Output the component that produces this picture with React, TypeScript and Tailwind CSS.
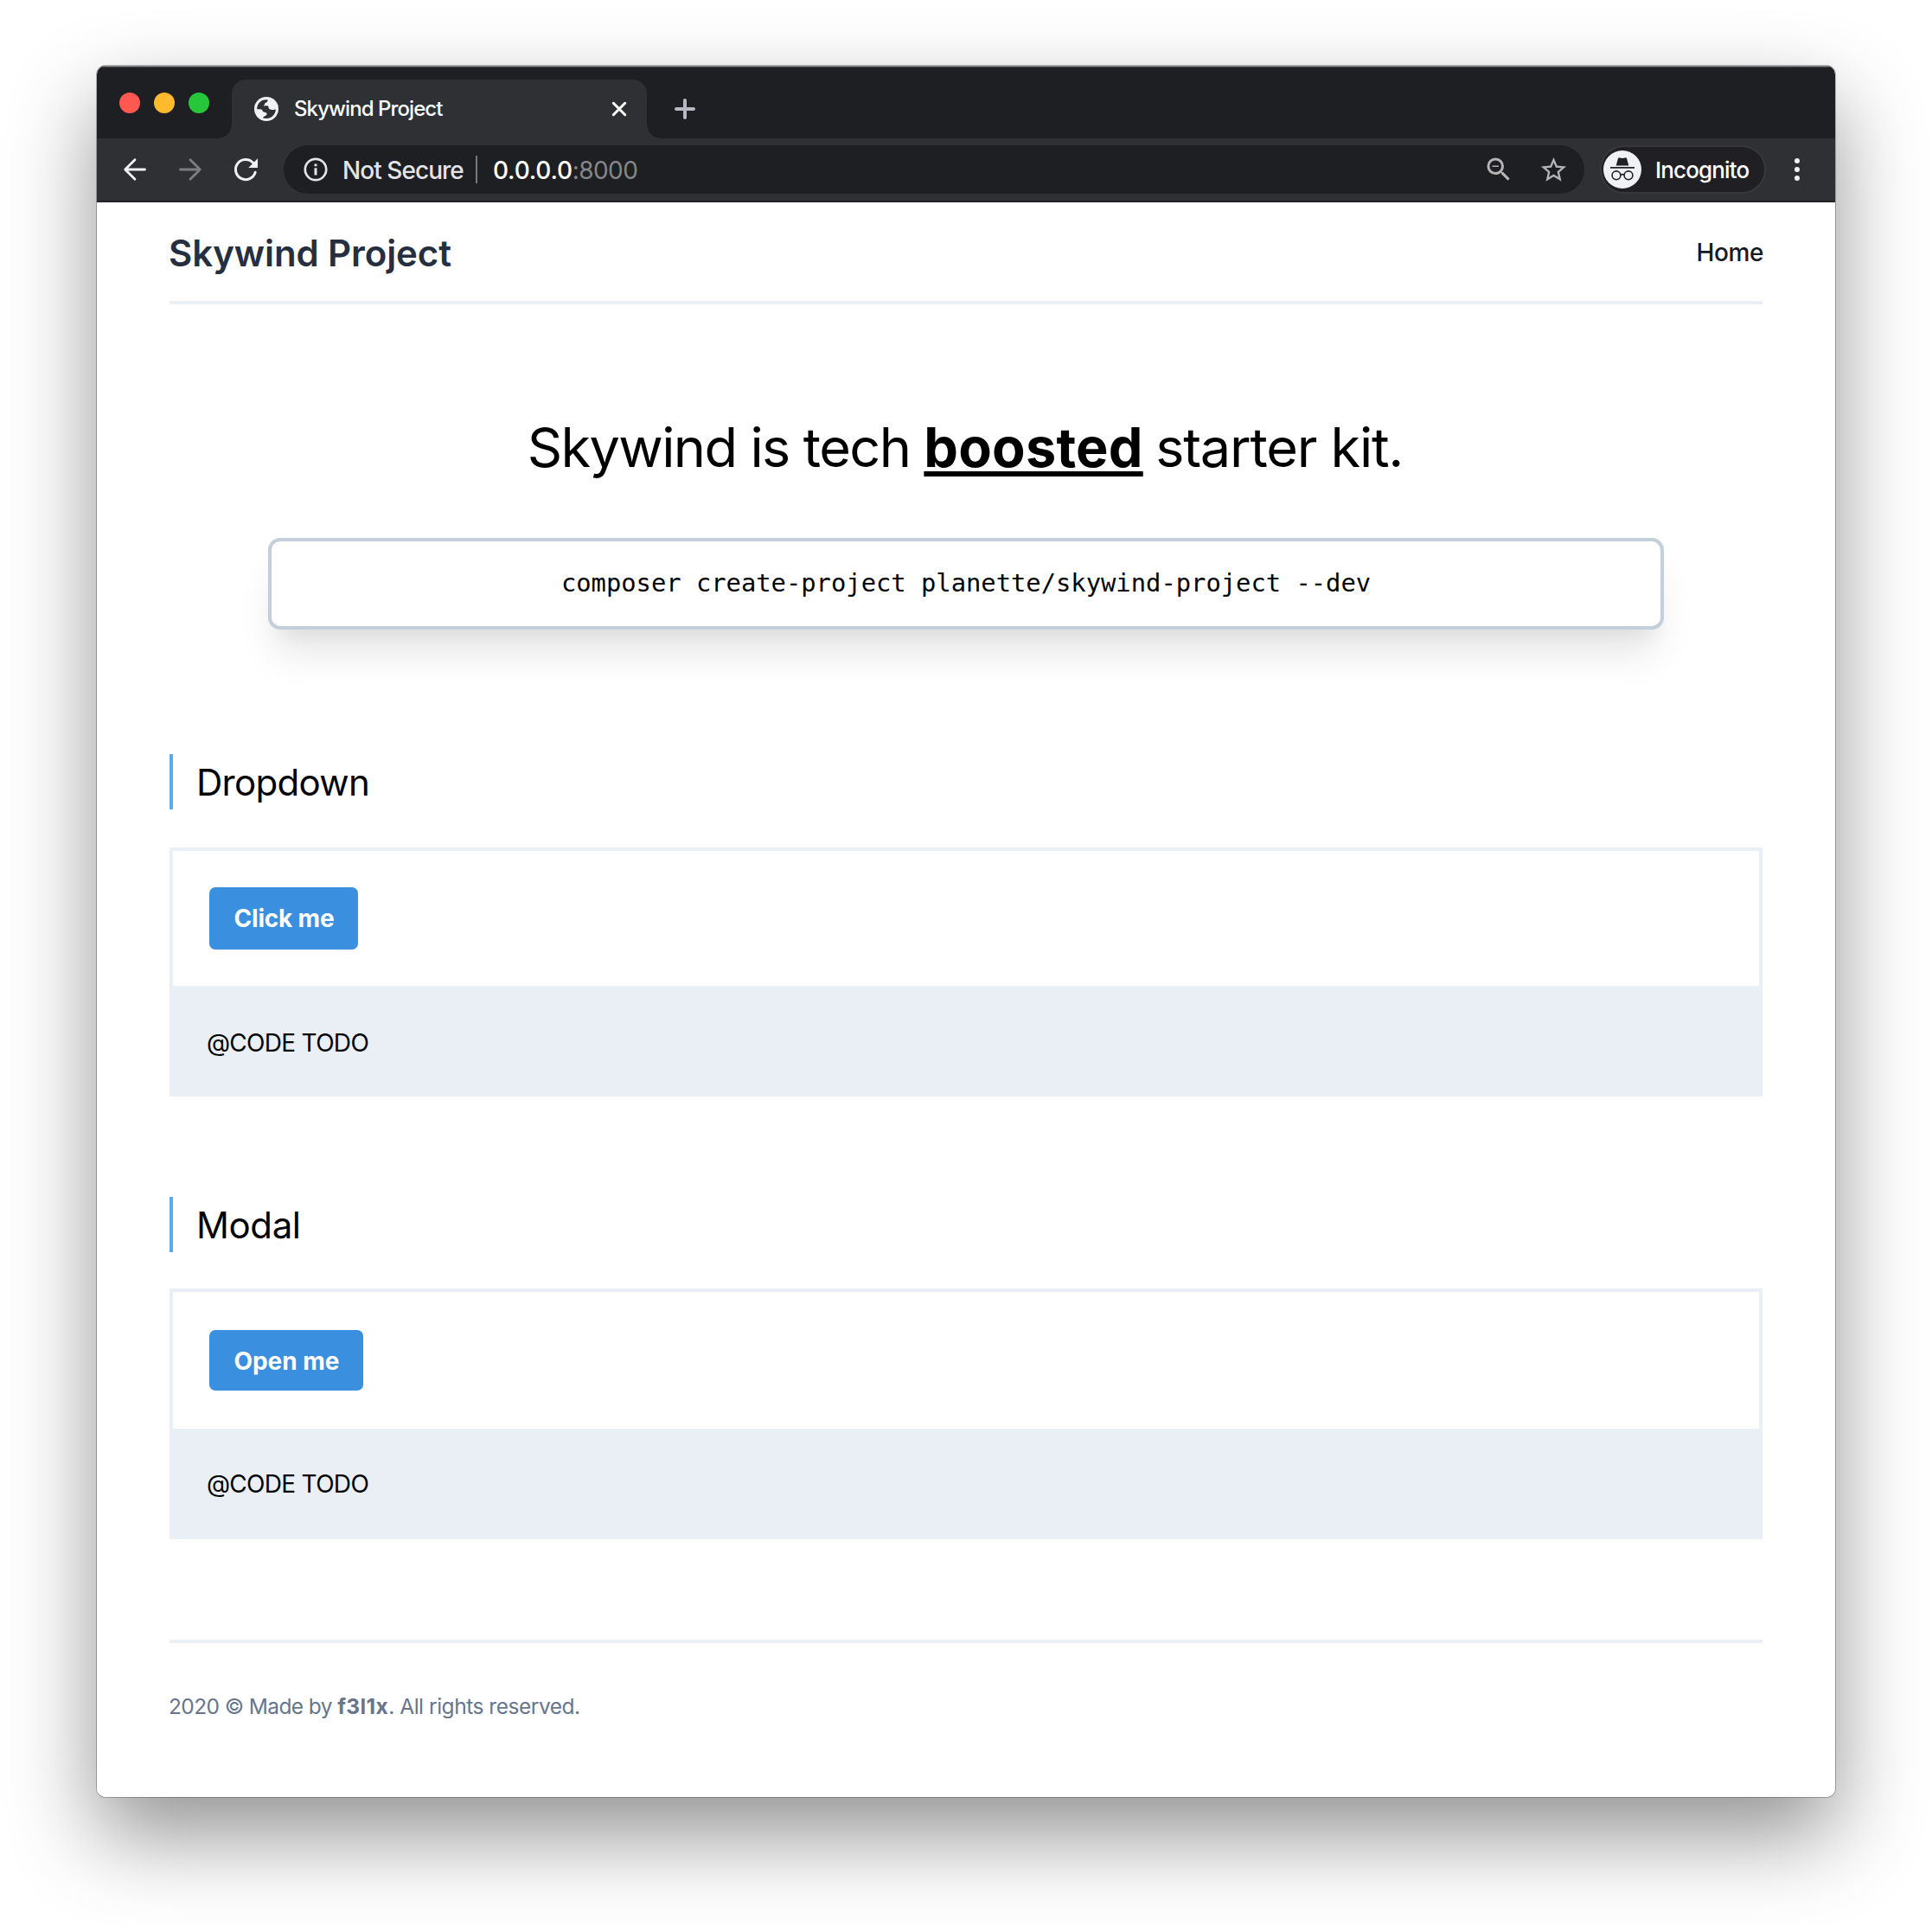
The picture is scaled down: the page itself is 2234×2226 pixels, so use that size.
import type { ReactNode } from "react";
import { MdStarBorder, MdZoomOut } from "react-icons/md";

function GlobeIcon() {
  return (
    <svg width="28" height="28" viewBox="0 0 28 28">
      <circle cx="14" cy="14" r="14" fill="#f0f1f4" />
      <path
        d="M3.2 14.2C3 11 4.500 7.200 7.500 5.200C9.500 3.700 12.500 3 15.500 3.500C15.800 5 15 6.300 13.600 6.500C12.800 6.600 12.300 7.200 12.300 8C12.300 9.200 11 9.300 10.800 10.300C11.500 10.900 14.200 10 15.800 10.500C17 11.300 16 13 17.500 14C19.500 15.600 22 15.200 24.800 14.200C24.800 20 20 25 14 25C12.600 25 11.200 24.700 10 24.300C10.500 22.700 12 22.300 13.300 21.700C14.600 21 15 19.400 14 18.500C12.700 17.500 10.500 18.300 9.700 16.600C9.300 15 8.500 14.200 6.800 14.200Z"
        fill="#2f3033"
      />
    </svg>
  );
}

function ArrowIcon({ className }: { className: string }) {
  return (
    <svg className={className} width="28" height="28" viewBox="0 0 28 28" fill="none" stroke="currentColor" strokeWidth="2.800" strokeLinecap="round" strokeLinejoin="round">
      <path d="M25.500 14H3M14 2.700L2.700 14L14 25.300" />
    </svg>
  );
}

function ReloadIcon() {
  return (
    <svg width="32" height="32" viewBox="0 0 32 32" fill="none">
      <path d="M27.200 19.200A11.600 11.600 0 1 1 24.600 8.200" stroke="#f0f1f4" strokeWidth="3" strokeLinecap="round" />
      <path d="M30 3.300V14H19.300Z" fill="#f0f1f4" />
    </svg>
  );
}

function InfoIcon() {
  return (
    <svg width="28" height="28" viewBox="0 0 28 28" fill="none">
      <circle cx="14" cy="14" r="12.200" stroke="#e4e4e6" strokeWidth="2.700" />
      <path d="M14 12.300V20.500M14 7.500V10.300" stroke="#e4e4e6" strokeWidth="3" />
    </svg>
  );
}

function IncognitoIcon() {
  return (
    <svg width="44" height="44" viewBox="0 0 44 44" fill="none">
      <circle cx="22" cy="22" r="22" fill="#f0f1f4" />
      <path d="M14.700 17.400L16.800 9.700Q17.300 8 19 8.400L22 9.100L25 8.400Q26.700 8 27.200 9.700L29.300 17.400Z" fill="#202124" />
      <path d="M8 19.900H36" stroke="#202124" strokeWidth="1.700" />
      <circle cx="15" cy="28.800" r="4.900" stroke="#202124" strokeWidth="1.600" />
      <circle cx="29" cy="28.800" r="4.900" stroke="#202124" strokeWidth="1.600" />
      <path d="M19.800 28.300Q22 27 24.200 28.300" stroke="#202124" strokeWidth="1.600" />
    </svg>
  );
}

function TabStrip() {
  return (
    <div className="flex h-[84px] bg-[#1e1f22] pl-[26px] shadow-[inset_0_1px_0_#8a8b8d,inset_0_2px_0_#4a4b4e]">
      <div className="mt-[31px] flex gap-4">
        <span className="size-6 rounded-full bg-[#ff5850]" />
        <span className="size-6 rounded-full bg-[#ffba2d]" />
        <span className="size-6 rounded-full bg-[#27c73c]" />
      </div>
      <div className="relative mt-4 ml-[26px] flex h-[68px] w-[480px] items-center rounded-t-2xl bg-[#2f3033] pl-[26px]">
        <span className="absolute bottom-0 -left-4 size-4 bg-[radial-gradient(circle_at_0_0,#1e1f22_15.500px,#2f3033_16px)]" />
        <span className="absolute -right-4 bottom-0 size-4 bg-[radial-gradient(circle_at_100%_0,#1e1f22_15.500px,#2f3033_16px)]" />
        <GlobeIcon />
        <span className="ml-[18px] -mt-px flex-1 text-[24px] leading-[30px] font-medium tracking-[-0.92px] text-white">Skywind Project</span>
        <svg className="mr-[23px]" width="18" height="18" viewBox="0 0 18 18" stroke="#fff" strokeWidth="3" strokeLinecap="round">
          <path d="M2.300 2.300L15.700 15.700M15.700 2.300L2.300 15.700" />
        </svg>
      </div>
      <svg className="mt-[38px] ml-8" width="24" height="24" viewBox="0 0 24 24" stroke="#b6b9c1" strokeWidth="4" strokeLinecap="round">
        <path d="M12 2V22M2 12H22" />
      </svg>
    </div>
  );
}

function Toolbar() {
  return (
    <div className="flex h-[74px] items-center border-b-2 border-[#232226] bg-[#2f3033] pl-[30px]">
      <ArrowIcon className="text-[#f0f1f4]" />
      <ArrowIcon className="ml-9 rotate-180 text-[#7c7d80]" />
      <div className="ml-[34px]">
        <ReloadIcon />
      </div>
      <div className="ml-7 flex h-14 w-[1504px] items-center rounded-full bg-[#1e1f22] pl-[23px] text-[28px] leading-[34px]">
        <InfoIcon />
        <span className="ml-[17px] w-[138px] pt-px font-medium tracking-[-0.95px] whitespace-nowrap text-[#e4e4e6]">Not Secure</span>
        <span className="ml-4 h-8 w-0.5 bg-[#77787b]" />
        <span className="ml-[18px] flex-1 pt-px font-medium tracking-[-0.2px] text-white">
          0.0.0.0<span className="font-normal tracking-[-0.6px] text-[#85878a]">:8000</span>
        </span>
        <MdZoomOut size={36} color="#b5b3b3" />
        <MdStarBorder className="mr-[18px] ml-7" size={35} color="#b5b3b3" />
      </div>
      <div className="ml-[18px] flex h-14 w-[192px] items-center rounded-full border-2 border-[#38383b] bg-[#202024] pl-0.5">
        <IncognitoIcon />
        <span className="ml-4 pt-px text-[26px] leading-8 font-medium tracking-[-0.85px] text-white">Incognito</span>
      </div>
      <div className="ml-[33px] flex flex-col gap-1">
        <span className="size-1.5 rounded-full bg-[#f0f1f4]" />
        <span className="size-1.5 rounded-full bg-[#f0f1f4]" />
        <span className="size-1.5 rounded-full bg-[#f0f1f4]" />
      </div>
    </div>
  );
}

function SectionTitle({ className, children }: { className: string; children: ReactNode }) {
  return (
    <h2 className={`flex h-16 items-center border-l-4 border-[#5aa9e8] pt-0.5 pl-[27px] text-[42px] leading-[52px] text-black ${className}`}>
      {children}
    </h2>
  );
}

type ExampleProps = { className: string; buttonClass: string; codeClass: string; label: string };

function Example({ className, buttonClass, codeClass, label }: ExampleProps) {
  return (
    <div className={`flex flex-col border-4 border-[#eaeff6] ${className}`}>
      <div className="flex flex-1 items-center pl-[42px]">
        <button className={`rounded-[7px] bg-[#3a8fde] pl-[28.500px] text-left text-[28px] leading-[34px] font-bold text-white ${buttonClass}`}>
          {label}
        </button>
      </div>
      <div className={`flex h-[124px] items-center bg-[#eaeff6] pl-[39px] text-[28px] leading-[34px] tracking-[-0.7px] text-black ${codeClass}`}>
        @CODE TODO
      </div>
    </div>
  );
}

export default function App() {
  return (
    <div className="h-[2226px] w-[2234px] overflow-hidden bg-white pt-[76px] pl-[112px] font-['Inter',sans-serif]">
      <div className="h-[2002px] w-[2010px] rounded-[10px] shadow-[0_0_0_1px_rgba(0,0,0,0.26),0_44px_100px_rgba(0,0,0,0.43)]">
        <div className="flex h-full flex-col overflow-hidden rounded-[10px] bg-white">
          <TabStrip />
          <Toolbar />
          <div className="px-[84px]">
            <header className="flex h-[118px] items-center justify-between border-b-4 border-[#eaeff6] pt-[3px]">
              <span className="-ml-px text-[42px] leading-[52px] font-semibold tracking-[-0.1px] text-[#262f40]">Skywind Project</span>
              <a className="-mt-[2px] -mr-px text-[28px] leading-[34px] font-medium tracking-[-0.4px] text-[#131a28]">Home</a>
            </header>

            <h1 className="mt-[125px] pr-0.5 text-center text-[63px] leading-[80px] whitespace-nowrap text-black">
              <span className="tracking-[-1.63px]">Skywind is tech </span>
              <strong className="font-bold tracking-[0.2px] underline decoration-[6px] underline-offset-[5px] [text-decoration-skip-ink:none]">boosted</strong>
              <span className="-ml-0.5 tracking-[-1.25px]"> starter kit.</span>
            </h1>

            <div className="mx-[114px] mt-[65px] flex h-[106px] items-center justify-center rounded-[14px] border-4 border-[#c3cfdb] bg-white pb-0.5 font-['DejaVu_Sans_Mono',monospace] text-[28.800px] leading-[40px] text-black shadow-[0_36px_45px_-9px_rgba(0,0,0,0.1),0_18px_18px_-9px_rgba(0,0,0,0.04)]">
              composer create-project planette/skywind-project --dev
            </div>

            <SectionTitle className="mt-[144px] tracking-[-0.7px]">Dropdown</SectionTitle>
            <Example
              className="mt-11 h-[288px]"
              buttonClass="h-[72px] w-[172px] tracking-[-0.2px]"
              codeClass="pt-[7px]"
              label="Click me"
            />

            <SectionTitle className="mt-[116px] tracking-[-0.4px]">Modal</SectionTitle>
            <Example
              className="mt-[42px] h-[290px]"
              buttonClass="h-[70px] w-[178px] pt-0.5 tracking-[-0.05px]"
              codeClass="pt-[3px]"
              label="Open me"
            />

            <footer className="mt-[116px] border-t-4 border-[#eaeff6] pt-[58px] text-[24.500px] leading-[30px] tracking-[-0.6px] text-[#67758d]">
              <span className="-ml-px">2020 © Made by </span>
              <strong className="font-bold tracking-[0.4px]">f3l1x</strong>
              <span className="tracking-[-0.47px]">. All rights reserved.</span>
            </footer>
          </div>
        </div>
      </div>
    </div>
  );
}
